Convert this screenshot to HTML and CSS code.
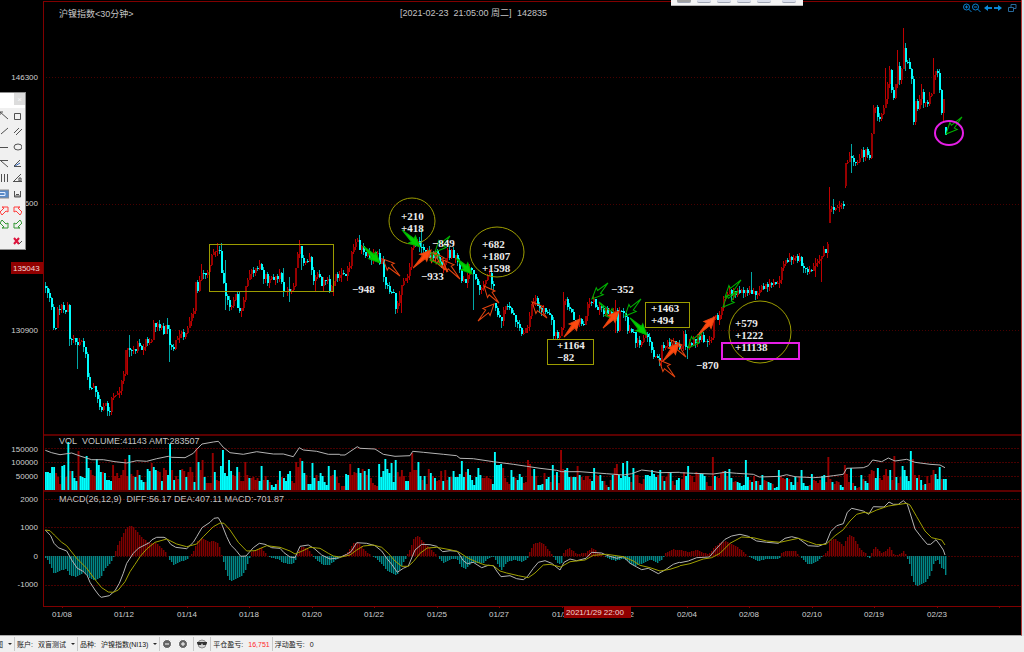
FILE: index.html
```html
<!DOCTYPE html>
<html lang="zh-CN">
<head>
    <meta charset="UTF-8">
    <meta name="viewport" content="width=device-width, initial-scale=1.0">
    <title>沪镍指数</title>
    <link rel="stylesheet" href="styles.css">
</head>
<body>
    <main class="workspace">
        <div class="charts">
            <!-- Price -->
            <svg id="price" class="panel" viewBox="0 0 1021 434" role="img" aria-label="沪镍指数">
                <path class="frame" d="M43.500 434V1.500H1021"/>
                <path class="grid dots" d="M46 77.500H1020M46 204.500H1020M46 330.500H1020"/>
                <g class="axis">
                    <text x="38" y="80">146300</text>
                    <text x="38" y="206">138600</text>
                    <text x="38" y="333">130900</text>
                </g>
                <rect class="tag" x="11" y="262" width="32" height="12"/>
                <text class="tag-text" x="13" y="271">135043</text>
                <text class="title" x="59" y="17">沪镍指数&lt;30分钟&gt;</text>
                <text class="cursor-time" x="400" y="16">[2021-02-23&#160; 21:05:00 周二]</text>
                <text class="cursor-time" x="517" y="16">142835</text>
                <g id="candles"></g>
                <g class="shape">
                    <rect x="209.500" y="244.500" width="124" height="47"/>
                    <rect x="547.500" y="339.500" width="46" height="25"/>
                    <rect x="645.500" y="302.500" width="44" height="25"/>
                    <ellipse cx="412" cy="221" rx="23" ry="23"/>
                    <ellipse cx="497" cy="252" rx="27" ry="25"/>
                    <ellipse cx="760" cy="332" rx="31" ry="31"/>
                </g>
                <g id="arrows"></g>
                <g class="shape hot">
                    <rect x="722" y="343" width="77" height="16"/>
                    <ellipse cx="949" cy="133" rx="14" ry="12"/>
                </g>
                <g class="note">
                    <text x="401" y="220">+210</text>
                    <text x="401" y="232">+418</text>
                    <text x="432" y="247">−849</text>
                    <text x="421" y="280">−933</text>
                    <text x="482" y="248">+682</text>
                    <text x="482" y="260">+1807</text>
                    <text x="482" y="272">+1598</text>
                    <text x="352" y="293">−948</text>
                    <text x="557" y="349">+1164</text>
                    <text x="557" y="361">−82</text>
                    <text x="611" y="293">−352</text>
                    <text x="651" y="312">+1463</text>
                    <text x="651" y="324">+494</text>
                    <text x="696" y="369">−870</text>
                    <text x="735" y="327">+579</text>
                    <text x="735" y="339">+1222</text>
                    <text x="735" y="351">+11138</text>
                </g>
            </svg>

            <!-- Volume -->
            <svg id="volume" class="panel" viewBox="0 434 1021 56" role="img" aria-label="VOL">
                <path class="frame thick" d="M43 435H1021"/>
                <path class="frame" d="M43.500 434V490"/>
                <path class="grid" d="M45 448.500H1020M45 462.500H1020M45 476.500H1020"/>
                <g id="bars"></g>
                <path id="volume-ma" class="line white"/>
                <g class="axis">
                    <text x="38" y="452">150000</text>
                    <text x="38" y="465">100000</text>
                    <text x="38" y="479">50000</text>
                </g>
                <text class="legend" x="59" y="444">VOL&#160; VOLUME:41143 AMT:283507</text>
            </svg>

            <!-- MACD and dates -->
            <svg id="macd" class="panel" viewBox="0 490 1021 145" role="img" aria-label="MACD">
                <path class="frame thick" d="M43 491H1021"/>
                <path class="frame" d="M43.500 490V606.500H1021"/>
                <path class="grid" d="M45 499.500H1020M45 527.500H1020M45 556.500H1020M45 585.500H1020"/>
                <path class="frame" d="M62.500 606v2M124.500 606v2M187.500 606v2M249.500 606v2M312.500 606v2M374.500 606v2M437.500 606v2M499.500 606v2M562.500 606v2M687.500 606v2M749.500 606v2M812.500 606v2M874.500 606v2M937.500 606v2M999.500 606v2"/>
                <g id="hist"></g>
                <path id="diff" class="line white"/>
                <path id="dea" class="line yellow"/>
                <g class="axis">
                    <text x="38" y="502">2000</text>
                    <text x="38" y="530">1000</text>
                    <text x="38" y="559">0</text>
                    <text x="38" y="587">-1000</text>
                </g>
                <text class="legend" x="59" y="502">MACD(26,12,9)&#160; DIFF:56.17 DEA:407.11 MACD:-701.87</text>
                <g class="dates">
                    <text x="62" y="617">01/08</text>
                    <text x="124" y="617">01/12</text>
                    <text x="187" y="617">01/14</text>
                    <text x="249" y="617">01/18</text>
                    <text x="312" y="617">01/20</text>
                    <text x="374" y="617">01/22</text>
                    <text x="437" y="617">01/25</text>
                    <text x="499" y="617">01/27</text>
                    <text x="562" y="617">01/29</text>
                    <text x="624" y="617">02/02</text>
                    <text x="687" y="617">02/04</text>
                    <text x="749" y="617">02/08</text>
                    <text x="812" y="617">02/10</text>
                    <text x="874" y="617">02/19</text>
                    <text x="937" y="617">02/23</text>
                </g>
                <rect class="tag" x="564" y="606" width="67" height="12"/>
                <text class="tag-text" x="566" y="615">2021/1/29 22:00</text>
            </svg>
        </div>

        <!-- Drawing tools, partly off the left edge -->
        <aside class="palette">
            <header><button type="button" aria-label="关闭">×</button></header>
            <div class="tools">
                <button type="button" aria-label="射线"><svg viewBox="0 0 9 10"><path d="M0 1l8 7M0 1h3M0 1v3"/></svg></button>
                <button type="button" aria-label="矩形"><svg viewBox="0 0 9 10"><path d="M1.500 2.500h6v6h-6z"/></svg></button>
                <button type="button" aria-label="线段"><svg viewBox="0 0 9 10"><path d="M1 8l7-6"/></svg></button>
                <button type="button" aria-label="平行线"><svg viewBox="0 0 9 10"><path d="M1 7l5-5M3 9l6-6"/></svg></button>
                <button type="button" aria-label="水平线"><svg viewBox="0 0 9 10"><path d="M0 5.500h8"/></svg></button>
                <button type="button" aria-label="椭圆"><svg viewBox="0 0 9 10"><ellipse cx="5" cy="5" rx="4" ry="3"/></svg></button>
                <button type="button" aria-label="扇形线"><svg viewBox="0 0 9 10"><path d="M0 2.500h8M1 3l7 6"/></svg></button>
                <button type="button" aria-label="角度线"><svg viewBox="0 0 9 10"><path d="M1 8.500h7M1 8l6-6"/><path class="blue" d="M2 8l5-3"/></svg></button>
                <button type="button" aria-label="周期线"><svg viewBox="0 0 9 10"><path d="M1.500 1v8M4.500 1v8M7.500 1v8"/></svg></button>
                <button type="button" aria-label="锁定角度"><svg viewBox="0 0 9 10"><path d="M0 8.500h9M1 8l7-7M6 5h2v3h-2z"/></svg></button>
                <button type="button" aria-label="文字"><svg viewBox="0 0 9 10"><path class="blue-fill" d="M-1 1h10v8h-10z"/><path class="light" d="M0 3.500h5M0 6.500h5v-3"/></svg></button>
                <button type="button" aria-label="保存"><svg viewBox="0 0 9 10"><path d="M1.500 2v6h6v-6M2 7h5M3 5.500h3"/></svg></button>
                <button type="button" aria-label="红色上箭头"><svg class="up" viewBox="0 0 9 10"><path d="M0 7l4-4-2-1h6v5l-2-1-4 4z"/></svg></button>
                <button type="button" aria-label="红色左箭头"><svg class="up" viewBox="0 0 9 10"><path d="M9 7l-4-4 2-1h-6v5l2-1 4 4z"/></svg></button>
                <button type="button" aria-label="绿色下箭头"><svg class="down" viewBox="0 0 9 10"><path d="M0 3l4 4-2 1h6v-5l-2 1-4-4z"/></svg></button>
                <button type="button" aria-label="绿色左箭头"><svg class="down" viewBox="0 0 9 10"><path d="M9 3l-4 4 2 1h-6v-5l2 1 4-4z"/></svg></button>
                <span></span>
                <button type="button" aria-label="删除"><svg viewBox="0 0 9 10"><path class="cross" d="M1 2l5 6M6 2l-5 6"/><path d="M6 8l3-3"/></svg></button>
            </div>
        </aside>

        <div class="top-strip">
            <i class="dark"></i><i></i><i></i><i></i><i></i><i class="last"></i>
        </div>

        <div class="view-tools">
            <button type="button" aria-label="放大"><svg viewBox="0 0 9 10"><circle cx="3.500" cy="4" r="3"/><path d="M2 4h3M3.500 2.500v3M5.500 6l3 3"/></svg></button>
            <button type="button" aria-label="缩小"><svg viewBox="0 0 9 10"><circle cx="3.500" cy="4" r="3"/><path d="M2 4h3M5.500 6l3 3"/></svg></button>
            <button type="button" aria-label="左移" class="move"><svg viewBox="0 0 9 10"><path class="shaft" d="M3 5h5"/><path class="solid" d="M0 5l4-3v6z"/></svg></button>
            <button type="button" aria-label="右移"><svg viewBox="0 0 9 10"><path class="shaft" d="M1 5h5"/><path class="solid" d="M9 5l-4-3v6z"/></svg></button>
            <button type="button" aria-label="还原" class="restore"><svg viewBox="0 0 9 10"><path d="M.5 4.500h5v4h-5zM3 4v-2.500h5v4H6"/></svg></button>
        </div>
    </main>

    <footer class="status">
        <div class="group"><span>图</span><b class="caret"></b></div>
        <div class="group account"><span>账户:</span><button type="button">双盲测试<b class="caret"></b></button></div>
        <div class="group product"><span>品种:</span><button type="button">沪镍指数(NI13)<b class="caret"></b></button></div>
        <div class="group icons">
            <button type="button" aria-label="减仓"><svg viewBox="0 0 10 10"><circle cx="5" cy="5" r="4.500"/><path d="M3 5h4"/></svg></button>
            <button type="button" aria-label="加仓"><svg viewBox="0 0 10 10"><circle cx="5" cy="5" r="4.500"/><path d="M3 5h4M5 3v4"/></svg></button>
        </div>
        <div class="group face">
            <button type="button" aria-label="盲测"><svg viewBox="0 0 10 10"><circle class="skin" cx="5" cy="5" r="4"/><path class="glasses" d="M0 3h10v1l-1 2H6L5 4 4 6H1L0 4z"/></svg></button>
        </div>
        <div class="group"><span>平仓盈亏:</span><strong>16,751</strong></div>
        <div class="group"><span>浮动盈亏:</span><span>0</span></div>
    </footer>

    <script src="chart.js"></script>
</body>
</html>
```
FILE: styles.css
```css
body {
    margin: 0;
    min-height: 100vh;
    display: flex;
    flex-direction: column;
    background-color: #f0f0f0;
    font-family: "Liberation Sans", "Noto Sans CJK SC", sans-serif;
    font-size: 8px;
    overflow-x: hidden;
}
button {
    border: 0;
    padding: 0;
    margin: 0;
    background: none;
    font: inherit;
    color: inherit;
}
.workspace {
    position: relative;
    background-color: #dfe6ec;
    padding-right: 2px;
}
.charts {
    background-color: #000;
    border-right: 1px solid #b43c3c;
    border-bottom: 1px solid #aaa;
}
.panel {
    display: block;
    width: 100%;
    height: auto;
}
.frame {
    fill: none;
    stroke: #800000;
    shape-rendering: crispEdges;
}
.thick {
    stroke: #5c0000;
    stroke-width: 2;
}
.grid {
    stroke: #480000;
    stroke-dasharray: 2 1;
    shape-rendering: crispEdges;
}
.dots {
    stroke-dasharray: 1 2;
}
.axis text,
.dates text {
    fill: #d0d0d0;
    text-anchor: end;
}
.dates text {
    text-anchor: middle;
}
.legend,
.title,
.cursor-time {
    fill: #c4c4c4;
    font-size: 9px;
}
.tag {
    fill: #900000;
}
.tag-text {
    fill: #f0d8d8;
}
.shape {
    fill: none;
    stroke: #9c9c00;
}
.hot {
    stroke: #e61ee6;
    stroke-width: 2;
}
.note text {
    fill: #ececec;
    font-family: "Liberation Serif", serif;
    font-size: 11px;
    font-weight: bold;
}
.rise {
    stroke: #c00000;
}
.rise-bar {
    fill: #980000;
}
.fall {
    stroke: #00a8a8;
}
.fall-bar {
    fill: #00ffff;
}
.rise,
.fall,
#candles .rise-bar,
#candles .fall-bar {
    shape-rendering: crispEdges;
}
.hist-up {
    fill: #800000;
}
.hist-down {
    fill: #008888;
}
.line {
    fill: none;
}
.white {
    stroke: #b4b4b4;
}
.yellow {
    stroke: #a0a000;
}
.arrow-up {
    stroke: #e6440f;
    fill: none;
}
.arrow-down {
    stroke: #00b400;
    fill: none;
}
.arrow-up.solid {
    fill: #ff4a10;
}
.arrow-down.solid {
    fill: #00d200;
}

/* Drawing palette */
.palette {
    position: absolute;
    left: 0;
    top: 92px;
    width: 26px;
    background-color: #f0f0f0;
    border: 1px solid #8c8c8c;
    border-left: 0;
    box-sizing: border-box;
    overflow: hidden;
}
.palette header {
    display: flex;
    justify-content: flex-end;
    background-color: #fff;
    height: 15px;
}
.palette header button {
    width: 11px;
    height: 12px;
    background-color: #dcdcdc;
    color: #f8f8f8;
}
.tools {
    display: grid;
    grid-template-columns: 9px 9px;
    grid-auto-rows: 1fr;
    column-gap: 4px;
    height: 141px;
}
.tools button {
    display: flex;
    align-items: center;
}
.tools svg {
    width: 9px;
    height: 10px;
    fill: none;
    stroke: #505050;
}
.tools .blue {
    stroke: #3264b4;
}
.tools .blue-fill {
    fill: #5a8cc8;
    stroke: #8c8c8c;
}
.tools .light {
    stroke: #e6f0ff;
}
.tools .cross {
    stroke: #dc143c;
    stroke-width: 2;
}
.tools .up {
    stroke: #ff3c3c;
}
.tools .down {
    stroke: #329632;
}

/* Strip that hangs from the top edge */
.top-strip {
    position: absolute;
    left: 671px;
    top: 0;
    width: 132px;
    height: 6px;
    box-sizing: border-box;
    padding: 0 6px;
    display: flex;
    gap: 6px;
    background-color: #f4f4f4;
    border-bottom: 1px solid #b4b4b4;
}
.top-strip i {
    width: 14px;
    height: 2px;
    background-color: #dce0ec;
    border-bottom: 1px solid #a0a6b4;
    border-radius: 0 0 2px 2px;
}
.top-strip .dark {
    background-color: #a0a0a0;
}
.top-strip .last {
    margin-left: 5px;
}
.view-tools {
    position: absolute;
    top: 3px;
    right: 7px;
    display: flex;
}
.view-tools svg {
    display: block;
    width: 9px;
    height: 10px;
    fill: none;
    stroke: #0a82d2;
}
.view-tools .shaft {
    stroke-width: 2;
}
.view-tools .solid {
    fill: #0a8cdc;
    stroke: none;
}
.view-tools .move {
    margin-left: 3px;
}
.view-tools .restore {
    margin-left: 6px;
}
.view-tools .restore svg {
    stroke: #28699b;
}

/* Status bar */
.status {
    display: flex;
    height: 16px;
    align-items: center;
    color: #141414;
    font-size: 7px;
}
.group {
    display: flex;
    align-items: center;
    gap: 5px;
    height: 14px;
    padding: 0 2px;
    border-right: 1px solid #c8c8c8;
    white-space: nowrap;
}
.group:first-child {
    margin-left: -6px;
}
.group:last-child {
    border-right: 0;
}
.group button {
    display: flex;
    align-items: center;
    gap: 5px;
}
.caret {
    border: 2px solid transparent;
    border-top-color: #282828;
    border-bottom-width: 0;
}
.group.icons {
    padding: 0 5px 0 1px;
}
.group.icons button {
    padding-left: 1px;
}
.icons svg,
.face svg {
    width: 10px;
    height: 10px;
    fill: #646464;
    stroke: #fff;
}
.group.face {
    padding: 0 3px;
}
.skin {
    fill: #d2d2d2;
    stroke: #8c8c8c;
}
.glasses {
    fill: #323232;
    stroke: none;
}
.status strong {
    color: #ff2828;
    font-weight: normal;
}
```
FILE: chart.js
```js
// closing level of every bar, left to right
var closes = [
    288, 293, 298, 307, 328, 328, 309, 309, 305, 310, 312, 305, 339, 339, 338, 342, 345, 342, 341, 347,
    354, 377, 388, 388, 386, 392, 399, 407, 410, 406, 403, 411, 412, 398, 396, 395, 393, 391, 381,
    374, 350, 348, 350, 350, 349, 351, 343, 346, 350, 347, 339, 343, 342, 340, 323, 327, 324, 328, 326,
    334, 325, 329, 345, 347, 349, 340, 338, 334, 332, 337, 333, 328, 321, 314, 311, 282, 291, 280, 273,
    273, 275, 272, 265, 255, 252, 251, 250, 251, 273, 283, 296, 300, 307, 306, 300, 294, 308, 311, 308,
    300, 286, 280, 274, 270, 273, 268, 269, 264, 270, 279, 274, 283, 279, 277, 280, 276, 279, 273, 282,
    291, 291, 289, 291, 290, 286, 268, 254, 246, 258, 263, 261, 262, 257, 270, 281, 277, 274, 277, 286,
    280, 281, 279, 291, 286, 281, 274, 278, 275, 273, 274, 276, 268, 266, 252, 247, 242, 240, 250, 246,
    252, 256, 252, 258, 260, 252, 254, 253, 264, 259, 277, 285, 286, 292, 292, 293, 309, 303, 295, 285,
    281, 278, 276, 267, 248, 245, 246, 241, 247, 247, 250, 253, 250, 258, 254, 258, 251, 257, 262, 268,
    265, 258, 250, 258, 250, 258, 255, 262, 270, 281, 279, 283, 275, 268, 270, 274, 279, 285, 290, 288,
    284, 280, 276, 273, 284, 286, 308, 315, 317, 321, 310, 306, 306, 308, 313, 315, 322, 324, 328, 334,
    333, 328, 327, 316, 305, 301, 298, 306, 308, 312, 308, 312, 313, 315, 320, 336, 332, 338, 336, 328,
    301, 299, 307, 309, 312, 320, 322, 324, 319, 324, 325, 316, 304, 302, 302, 299, 307, 310, 306, 308,
    314, 308, 314, 312, 315, 311, 310, 331, 311, 311, 313, 317, 331, 329, 332, 332, 343, 340, 345, 342,
    338, 334, 337, 342, 350, 357, 356, 358, 361, 345, 348, 346, 342, 347, 346, 341, 347, 344, 349, 346,
    334, 347, 348, 343, 345, 339, 343, 336, 340, 335, 342, 341, 341, 340, 338, 319, 315, 320, 315, 308,
    299, 296, 294, 290, 296, 291, 295, 290, 293, 290, 293, 290, 293, 290, 294, 291, 295, 293, 290, 286,
    289, 284, 287, 283, 285, 282, 284, 283, 280, 268, 264, 260, 262, 257, 260, 258, 256, 261, 257, 266,
    268, 269, 272, 270, 271, 266, 263, 261, 259, 256, 249, 253, 244, 209, 207, 210, 208, 207, 205, 204,
    206, 163, 162, 156, 158, 162, 163, 162, 158, 150, 157, 149, 155, 158, 134, 108, 107, 117, 119, 114,
    108, 99, 84, 70, 90, 98, 84, 66, 80, 69, 48, 62, 62, 69, 79, 122, 101, 109, 99, 92,
    103, 102, 104, 96, 94, 75, 71, 73, 90, 113, 99, 135
];

// bars that open away from the previous close
var opens = {225: 303, 392: 223, 400: 186, 450: 127};

// long wicks: bar -> [high, low]
var wicks = {
    0: [282, 293], 11: [302, 312], 12: [304, 346], 16: [338, 369], 41: [348, 375], 42: [335, 357],
    61: [318, 334], 62: [325, 362], 78: [264, 281], 86: [243, 256], 88: [243, 252], 90: [260, 310],
    97: [292, 313], 98: [308, 317], 112: [276, 288], 119: [268, 297], 122: [277, 302], 127: [240, 258],
    128: [246, 270], 135: [275, 291], 144: [286, 296], 148: [268, 282], 155: [239, 250], 157: [235, 248],
    178: [303, 313], 188: [228, 255], 214: [296, 310], 228: [317, 328], 245: [295, 306], 259: [292, 330],
    285: [300, 333], 308: [356, 366], 320: [330, 350], 321: [346, 359], 353: [272, 293], 385: [258, 277],
    388: [258, 282], 392: [187, 223], 394: [199, 214], 403: [144, 173], 420: [68, 100], 426: [50, 88],
    429: [28, 60], 430: [43, 71], 434: [76, 125], 438: [84, 105], 444: [58, 77], 449: [99, 122]
};

// bar heights of the volume panel; a minus marks a rising bar
var volume = [
    [45, 340, [18, 18, 17, 23, 23, -17, -13, -6, 24, 25, -13, 48, -19, 19, 12, 9, -39, 14, 13, 12, 34, 22, -20, -15, -14, 31, 25, 18, -18, 17, 10, 10, 9, -25, -14, -17, -12, -15, -20, -31, -14, 35, -16, -14, 13, -20, 15, 10, 8, -8, 21, 19, -27, 23, 20, -19, -18, 9, -22, -20, 15, 46, -20, 10, -14, -11, 20, -21, -19, 13, -18, -23, -18, 8, -42, 28, -20, -30, 13, -7, -7, -7, -37, 18, -10, -9, 24, 40, 17, 14, 30, 19, -15, -14, 23, -18, -9, -9, -28, -15, 12, -12, -13, -10, -12, 9, 24, -10, -14, 10, -8, 5, 3, 6, -10, 19, -13, 12, 9, 16, 19, -9, -7, -28, -23, -32, 29, 17, -15, 6, 6, 27, 12, -15, 9, 17, 14, 8, 5, 24, -14, -15, 20, -13, -7]],
    [341, 680, [-4, -4, 16, 15, -26, -15, -18, -17, 22, 17, -21, 19, -15, 21, -12, -7, -5, -4, 26, 13, 19, 31, 21, 17, 27, 8, 30, -18, -13, -20, -14, 9, 9, -18, -37, -20, -20, 28, 14, -10, 14, -6, -21, 17, -14, 12, -9, -10, -19, 9, -20, -10, 13, -13, 19, 13, 13, 16, 29, 13, -18, 21, 15, 10, 5, 13, 22, 15, -12, -12, -14, -12, -11, 6, 38, 25, 25, 26, -22, -12, -8, -6, 20, 13, -12, 10, 16, 13, -7, -8, -30, -26, -14, 21, -14, 5, 5, 6, -17, 11, 13, -8, 25, -15, 18, -7, -40, -21, 20, 22, 13, -13, 13, 13, -24, 15, -13, -10, -14, -14, -11, 9, 22, -15, -14, 15, 9, -9, -5, 3, -10, 15, -22, -26, 15, 12, 27, 14, 29, 13, -8, 22, -15, -15, -7, -6, -11, 15, 15, 14, 20, 16, 13, -15, 20, -14, 9, -13, -17, 18, -9, -5, 10, 12]],
    [681, 947, [-11, -18, 14, 24, -15, -14, -8, -18, -17, 17, 16, 14, -8, -4, -4, -33, 14, -13, -12, -17, -19, 19, -14, 21, 12, -8, -9, 8, 7, 4, 5, 30, 13, -10, 8, -14, 9, -9, 5, 15, -10, -9, 8, 7, -6, 2, 3, 20, -14, -12, -11, 12, -11, 8, 5, 13, -8, -13, 20, 7, 4, 4, -5, 16, -10, -9, -7, -10, 14, 15, -8, -33, -11, 8, -6, -9, -8, 5, 3, -25, -16, -8, 22, -7, 4, -2, -3, 15, -11, 9, 7, -16, -20, -19, 12, 22, -12, -10, -15, -21, -14, 20, -10, -34, 13, -7, -13, 24, 20, 14, 9, 39, -31, -15, 12, -15, 10, -5, 6, -14, -7, -15, -20, 16, 11, 23, -11, 11, 11]]
];

// [left edge, points], points on a grid of thirds
var volumeMa = [
    [0, [136,76, 155,83, 180,89, 215,84, 240,93, 275,104, 310,104, 345,110, 380,114, 410,107, 440,109, 470,101, 505,94, 515,97, 555,98, 580,85, 590,73, 606,57, 640,51, 655,49, 670,67, 690,83, 730,88, 770,80, 820,87, 850,87, 880,95, 898,68, 910,75, 950,79, 985,88, 1019,88]],
    [340, [0,90, 15,90, 52,65, 60,70, 105,72, 130,88, 165,94, 210,92, 218,79, 250,82, 310,88, 350,92, 360,100, 400,101, 460,110, 520,118, 560,124, 600,130, 650,136, 665,140, 720,140, 800,146, 850,150, 875,146, 905,135, 930,138, 960,143, 1018,142]],
    [680, [0,143, 40,145, 100,147, 135,142, 170,145, 220,148, 238,156, 300,154, 320,149, 345,155, 400,158, 430,156, 460,152, 490,148, 500,130, 550,128, 565,122, 578,105, 605,110, 625,99, 645,108, 680,103, 705,112, 750,118, 780,120, 795,128]]
];
var diff = [
    [0, [136,315, 152,332, 162,355, 175,368, 200,378, 215,405, 232,430, 248,438, 262,452, 270,472, 285,495, 298,512, 304,517, 328,512, 345,497, 358,475, 370,445, 380,415, 400,385, 415,370, 448,353, 456,344, 470,337, 492,337, 500,341, 512,358, 527,367, 560,371, 580,352, 590,335, 606,308, 630,292, 642,280, 655,278, 663,292, 680,335, 692,360, 708,376, 722,394, 738,393, 760,368, 778,355, 795,358, 815,368, 840,370, 852,383, 870,396, 885,398, 900,364, 925,360, 942,370, 965,390, 990,402, 1019,398]],
    [340, [0,397, 20,388, 33,380, 50,353, 80,355, 105,362, 125,378, 140,400, 155,418, 172,442, 190,430, 205,423, 225,375, 245,358, 270,359, 290,364, 308,380, 330,377, 352,379, 370,407, 382,416, 400,412, 425,428, 445,421, 460,422, 470,438, 483,455, 510,452, 530,461, 550,464, 562,455, 580,430, 595,412, 615,407, 635,415, 660,435, 672,412, 690,402, 710,407, 738,400, 755,382, 785,384, 800,391, 830,400, 850,395, 870,415, 890,426, 905,434, 925,430, 955,446, 975,435, 1000,418, 1018,412]],
    [680, [0,413, 25,408, 50,398, 88,396, 110,370, 135,343, 155,333, 180,328, 205,334, 230,348, 260,352, 295,355, 315,340, 335,335, 355,340, 385,362, 415,364, 438,355, 452,320, 470,302, 490,296, 502,262, 515,250, 550,258, 566,268, 580,245, 612,246, 627,231, 640,238, 655,238, 670,227, 682,238, 692,270, 705,312, 725,338, 742,358, 752,358, 768,344, 780,360, 790,375, 795,390]]
];
var dea = [
    [0, [136,315, 150,317, 163,330, 185,352, 200,362, 230,400, 260,430, 290,470, 305,488, 325,501, 340,502, 355,495, 375,470, 390,440, 405,418, 420,395, 440,372, 465,352, 500,342, 530,357, 560,365, 590,357, 610,335, 640,305, 660,294, 672,295, 690,315, 715,352, 740,378, 765,377, 800,362, 840,367, 870,378, 885,387, 905,379, 930,367, 960,370, 985,385, 1000,393, 1019,396]],
    [340, [0,397, 30,390, 50,375, 70,363, 100,360, 125,367, 145,385, 165,408, 185,424, 205,424, 220,410, 240,385, 262,369, 290,367, 330,374, 355,380, 385,400, 410,411, 435,420, 460,422, 480,438, 500,444, 535,452, 565,458, 585,444, 610,420, 630,418, 662,426, 690,410, 735,405, 760,391, 800,388, 850,395, 880,408, 900,421, 930,428, 960,438, 990,433, 1018,424]],
    [680, [0,422, 30,416, 70,402, 95,398, 120,385, 150,355, 185,336, 220,338, 260,348, 300,352, 355,340, 385,350, 410,359, 438,358, 465,332, 490,314, 510,288, 530,268, 552,262, 568,265, 590,255, 625,243, 680,235, 690,240, 710,275, 735,318, 755,338, 785,345, 795,360]]
];
var hist = [
    [0, [138,-5, 148,-25, 160,-53, 180,-43, 198,-40, 208,-60, 230,-62, 250,-48, 270,-70, 285,-71, 300,-65, 312,-40, 330,-20, 338,-5, 342,8, 352,35, 364,58, 374,80, 385,91, 398,88, 412,70, 430,50, 450,38, 465,40, 475,33, 488,18, 498,8, 504,-8, 520,-27, 535,-20, 562,-8, 572,5, 580,15, 590,45, 605,54, 625,42, 640,45, 655,35, 662,8, 667,-10, 678,-55, 690,-77, 708,-68, 722,-62, 736,-40, 746,-10, 752,12, 770,20, 783,25, 797,5, 806,-4, 830,-10, 850,-20, 872,-26, 884,-15, 890,5, 905,30, 925,18, 935,4, 942,-8, 965,-25, 985,-28, 1005,-12, 1019,-3]],
    [340, [5,2, 20,10, 40,40, 52,41, 65,27, 80,8, 90,3, 105,-5, 120,-20, 140,-45, 158,-55, 168,-60, 180,-35, 195,-8, 200,3, 208,20, 222,58, 235,60, 250,40, 270,20, 288,3, 296,-8, 308,-20, 330,-9, 350,-10, 360,-30, 375,-40, 395,-20, 430,-22, 445,-5, 460,-3, 475,-32, 483,-42, 500,-18, 520,-12, 545,-18, 560,-8, 566,10, 580,38, 600,42, 615,30, 635,4, 642,-10, 655,-24, 664,-20, 670,15, 685,25, 710,5, 735,10, 755,25, 775,10, 795,-4, 825,-15, 850,-8, 870,-22, 885,-30, 910,-20, 930,-12, 950,-22, 965,-10, 975,8, 1000,20, 1018,17]],
    [680, [3,18, 20,12, 50,18, 75,8, 85,5, 97,22, 115,38, 135,45, 155,35, 175,24, 190,10, 205,-3, 230,-16, 260,-9, 295,-10, 303,8, 320,16, 345,14, 360,-3, 380,-24, 400,-22, 420,-8, 430,5, 440,10, 448,45, 462,52, 480,40, 490,30, 498,55, 508,65, 520,55, 540,20, 555,8, 565,-10, 575,15, 585,28, 605,8, 628,27, 640,4, 655,3, 670,15, 680,-5, 687,-25, 695,-70, 708,-92, 735,-78, 750,-55, 760,-20, 770,-10, 782,-35, 790,-38, 796,-62]]
];

// tail x, tail y, tip x, tip y, direction, solid
var arrows = [
    [400, 276, 383, 259, 'up', 0], [460, 279, 443, 260, 'up', 0], [448, 272, 434, 252, 'up', 0],
    [445, 270, 428, 251, 'up', 0], [499, 303, 484, 286, 'up', 0], [478, 321, 494, 304, 'up', 0],
    [547, 318, 532, 302, 'up', 0], [686, 357, 671, 340, 'up', 0], [675, 377, 659, 360, 'up', 0],
    [962, 117, 946, 134, 'down', 0], [450, 236, 435, 252, 'down', 0], [428, 250, 441, 265, 'down', 0],
    [608, 283, 592, 299, 'down', 0], [641, 299, 625, 316, 'down', 0], [599, 302, 616, 320, 'down', 0],
    [703, 331, 688, 348, 'down', 0], [741, 280, 725, 297, 'down', 0], [738, 291, 723, 307, 'down', 0],
    [363, 246, 380, 263, 'down', 1], [402, 230, 420, 247, 'down', 1], [456, 258, 472, 274, 'down', 1],
    [630, 318, 647, 335, 'down', 1], [413, 268, 431, 250, 'up', 1], [564, 337, 580, 319, 'up', 1],
    [603, 328, 619, 311, 'up', 1], [663, 361, 679, 343, 'up', 1], [698, 335, 715, 317, 'up', 1]
];

function put(id, name, attrs) {
    var el = document.createElementNS('http://www.w3.org/2000/svg', name);
    for (var key in attrs) {
        el.setAttribute(key, attrs[key]);
    }
    document.getElementById(id).appendChild(el);
}

function flatten(parts) {
    var points = [];
    parts.forEach(function(part) {
        for (var i = 0; i < part[1].length; i += 2) {
            points.push([part[0] + part[1][i] / 3, part[1][i + 1] / 3]);
        }
    });
    return points;
}

function drawCandles() {
    var d = {rise: '', fall: '', riseBar: '', fallBar: ''};
    closes.forEach(function(close, i) {
        var open = opens[i] || (i ? closes[i - 1] : 286);
        var x = 45 + 2 * i;
        var top = Math.min(open, close);
        var bottom = Math.max(open, close, top + 1);
        var wick = wicks[i] || [top - (i * 7 % 5), bottom + (i * 11 % 6)];
        var kind = close < open ? 'rise' : 'fall';
        var high = Math.min(wick[0], top);
        var low = Math.max(wick[1], bottom);
        d[kind] += 'M' + (x + 0.5) + ' ' + high + 'V' + low;
        d[kind + 'Bar'] += 'M' + x + ' ' + top + 'h2V' + bottom + 'h-2z';
    });
    put('candles', 'path', {'class': 'rise', d: d.rise});
    put('candles', 'path', {'class': 'fall', d: d.fall});
    put('candles', 'path', {'class': 'rise-bar', d: d.riseBar});
    put('candles', 'path', {'class': 'fall-bar', d: d.fallBar});
}

function drawVolume() {
    var up = '';
    var down = '';
    volume.forEach(function(part) {
        var step = (part[1] - part[0]) / part[2].length;
        part[2].forEach(function(v, i) {
            var x = (part[0] + i * step).toFixed(2);
            var bar = 'M' + x + ' 490v-' + Math.abs(v) + 'h1.9V490z';
            if (v < 0) {
                up += bar;
            } else {
                down += bar;
            }
        });
    });
    put('bars', 'path', {'class': 'rise-bar', d: up});
    put('bars', 'path', {'class': 'fall-bar', d: down});
}

function drawLine(id, parts) {
    var d = flatten(parts).map(function(p) {
        return p[0].toFixed(1) + ' ' + (425 + p[1]).toFixed(1);
    });
    document.getElementById(id).setAttribute('d', 'M' + d.join('L'));
}

function drawHist() {
    var points = flatten(hist);
    var up = '';
    var down = '';
    var k = 0;
    for (var x = 45; x < 946; x += 2) {
        while (k < points.length - 2 && points[k + 1][0] < x) {
            k++;
        }
        var a = points[k];
        var b = points[k + 1];
        var t = Math.max(0, Math.min(1, (x - a[0]) / (b[0] - a[0])));
        var h = Math.round(a[1] + (b[1] - a[1]) * t);
        if (h > 0) {
            up += 'M' + x + ' 556v-' + h + 'h1.4V556z';
        } else if (h < 0) {
            down += 'M' + x + ' 556v' + (-h) + 'h1.4V556z';
        }
    }
    put('hist', 'path', {'class': 'hist-up', d: up});
    put('hist', 'path', {'class': 'hist-down', d: down});
}

function drawArrows() {
    arrows.forEach(function(a) {
        var dx = a[2] - a[0];
        var dy = a[3] - a[1];
        var len = Math.sqrt(dx * dx + dy * dy);
        var angle = Math.atan2(dy, dx) * 180 / Math.PI;
        var neck = len - 10;
        put('arrows', 'path', {
            'class': 'arrow-' + a[4] + (a[5] ? ' solid' : ''),
            d: 'M0 0L' + neck + ' -2L' + (neck - 1) + ' -5L' + len + ' 0L' + (neck - 1) + ' 5L' + neck + ' 2z',
            transform: 'translate(' + a[0] + ' ' + a[1] + ') rotate(' + angle + ')'
        });
    });
}

drawCandles();
drawVolume();
drawHist();
drawLine('volume-ma', volumeMa);
drawLine('diff', diff);
drawLine('dea', dea);
drawArrows();
```
